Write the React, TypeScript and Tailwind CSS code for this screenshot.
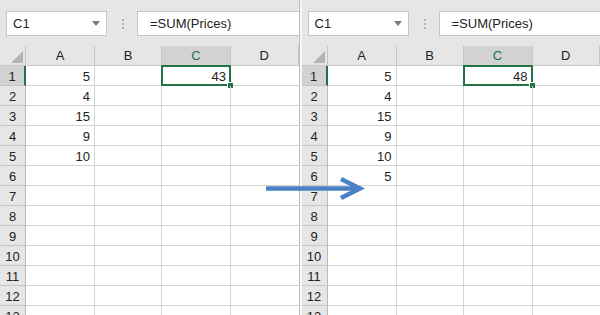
import React from 'react';

const cols = ['A', 'B', 'C', 'D'];
const grid = 'grid grid-cols-[26px_69px_67px_69px_1fr]';

const Sheet = ({ values, total }: { values: number[]; total: number }) => {
  const rows = Array.from({ length: 13 }, (_, i) => i + 1);

  return (
    <div className="flex-1 h-full flex flex-col bg-[#e6e6e6] overflow-hidden">
      {/* name box + formula bar */}
      <div className="h-[46px] shrink-0 flex items-start pt-[11px] pl-[6px]">
        <div className="w-[101px] h-[25px] bg-white border border-[#c6c6c6] flex items-center justify-between pl-[6px] pr-[6px]">
          <span>C1</span>
          <svg width="8" height="5" viewBox="0 0 8 5">
            <path d="M0 0H8L4 5Z" fill="#7a7a7a" />
          </svg>
        </div>
        <div className="ml-[15px] mt-[8px] flex flex-col gap-[2px]">
          <div className="w-[2px] h-[2px] bg-[#b4b4b4]" />
          <div className="w-[2px] h-[2px] bg-[#b4b4b4]" />
          <div className="w-[2px] h-[2px] bg-[#b4b4b4]" />
        </div>
        <div className="ml-[13px] flex-1 h-[25px] bg-white border border-r-0 border-[#c6c6c6] flex items-center pl-[12px]">
          =SUM(Prices)
        </div>
      </div>

      {/* column headers */}
      <div className={`${grid} h-[20px] shrink-0`}>
        <div className="border-r border-b border-[#c6c6c6] flex items-end justify-end pr-[2px] pb-[2px]">
          <svg width="12" height="12" viewBox="0 0 12 12">
            <path d="M12 0V12H0Z" fill="#b4b4b4" />
          </svg>
        </div>
        {cols.map((c) => (
          <div
            key={c}
            className={
              c === 'C'
                ? 'bg-[#d2d2d2] text-[#217346] border-r border-b border-[#c6c6c6] flex items-end justify-center pb-[2px] leading-[15px]'
                : 'border-r border-b border-[#c6c6c6] flex items-end justify-center pb-[2px] leading-[15px]'
            }
          >
            {c}
          </div>
        ))}
      </div>

      {/* rows */}
      {rows.map((r) => (
        <div key={r} className={`${grid} h-[20px] shrink-0 bg-white`}>
          <div
            className={
              r === 1
                ? 'bg-[#d2d2d2] border-r-2 border-r-[#217346] border-b border-b-[#c6c6c6] flex items-end justify-center leading-[15px] pb-[1px]'
                : 'bg-[#e6e6e6] border-r border-r-[#bababa] border-b border-b-[#c6c6c6] flex items-end justify-center leading-[15px] pb-[1px]'
            }
          >
            {r}
          </div>
          <div className="border-r border-b border-[#d4d4d4] flex items-end justify-end pr-[4px] leading-[15px] pb-[1px]">
            {values[r - 1] ?? ''}
          </div>
          <div className="border-r border-b border-[#d4d4d4]" />
          <div className="relative border-r border-b border-[#d4d4d4] flex items-end justify-end pr-[4px] leading-[15px] pb-[1px]">
            {r === 1 && (
              <>
                <span className="relative">{total}</span>
                <div className="absolute -left-[1px] -top-[1px] -right-[1px] -bottom-[1px] border-2 border-[#217346]" />
                <div className="absolute -right-[3px] -bottom-[3px] w-[6px] h-[6px] bg-[#217346] border-l border-t border-white" />
              </>
            )}
          </div>
          <div className="border-b border-[#d4d4d4]" />
        </div>
      ))}
    </div>
  );
};

export default function App() {
  return (
    <div className="relative w-[600px] h-[315px] overflow-hidden flex bg-white font-['Liberation_Sans',Arial,sans-serif] text-[13px] text-[#222]">
      <Sheet values={[5, 4, 15, 9, 10]} total={43} />
      <div className="w-[3px] h-full shrink-0 border-l border-[#bdbdbd] bg-[#f7f7f7]" />
      <Sheet values={[5, 4, 15, 9, 10, 5]} total={48} />

      <svg
        className="absolute left-[262px] top-[172px]"
        width="108"
        height="32"
        viewBox="0 0 108 32"
      >
        <line x1="4" y1="16.5" x2="97" y2="16.5" stroke="#4a80c4" strokeWidth="4.5" />
        <polyline
          points="79,7 98,16.5 79,26"
          fill="none"
          stroke="#4a80c4"
          strokeWidth="4.5"
          strokeLinejoin="miter"
        />
      </svg>
    </div>
  );
}
